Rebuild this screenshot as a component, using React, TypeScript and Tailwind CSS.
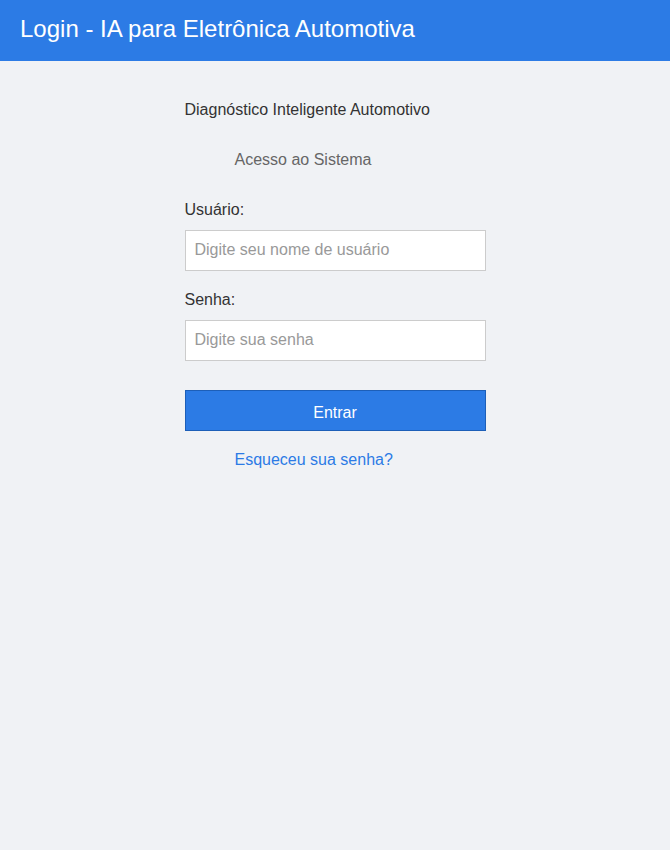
export default function App() {
  return (
    <div className="min-h-[850px] bg-[#f0f2f5] font-[family-name:'Liberation_Sans',Arial,sans-serif]">
      {/* header */}
      <header className="h-[61px] bg-[#2c7be5] px-5 pb-[4px] flex items-center">
        <h1 className="text-[24px] text-white leading-none">Login - IA para Eletrônica Automotiva</h1>
      </header>

      <div className="w-[301px] mx-auto pt-[39px] flex flex-col text-[16px]">
        <p className="text-[#333] leading-[20px] h-[20px] text-[16px]">Diagnóstico Inteligente Automotivo</p>
        <p className="text-[#666] leading-[20px] pl-[50px] mt-[30px]">Acesso ao Sistema</p>

        <label className="text-[#333] leading-[20px] mt-[30px]">Usuário:</label>
        <input
          type="text"
          placeholder="Digite seu nome de usuário"
          className="mt-[10px] h-[41px] w-full bg-white border border-[#ccc] px-[9px] pb-[2px] text-[16px] text-[#333] placeholder:text-[#999] outline-none"
        />

        <label className="text-[#333] leading-[20px] mt-[19px]">Senha:</label>
        <input
          type="password"
          placeholder="Digite sua senha"
          className="mt-[10px] h-[41px] w-full bg-white border border-[#ccc] px-[9px] pb-[2px] text-[16px] text-[#333] placeholder:text-[#999] outline-none"
        />

        <button className="mt-[29px] h-[41px] w-full bg-[#2c7be5] border border-[#1d5fb8] text-white text-[16px] pt-[4px]">
          Entrar
        </button>

        <a href="#" className="text-[#2c7be5] leading-[20px] pl-[50px] mt-[19px]">Esqueceu sua senha?</a>
      </div>
    </div>
  )
}
